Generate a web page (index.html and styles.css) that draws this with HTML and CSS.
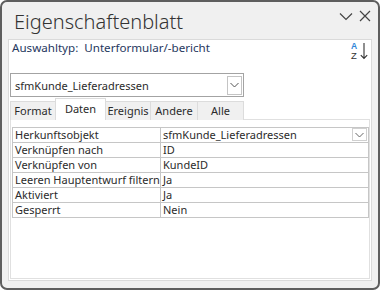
FILE: index.html
```html
<!DOCTYPE html>
<html>
<head>
<meta charset="utf-8" />
<title>Eigenschaftenblatt</title>
<link rel="stylesheet" href="styles.css">
</head>
<body>
<div class="window">
  <div class="titlebar">
    <h1 class="title">Eigenschaftenblatt</h1>
    <div class="title-btns">
      <svg class="tb-icon" width="14" height="10" viewBox="0 0 14 10"><polyline points="1,2.5 7,8.5 13,2.5" fill="none" stroke="#444" stroke-width="1.2"/></svg>
      <svg class="tb-icon" width="12" height="12" viewBox="0 0 12 12"><path d="M1 1L11 11M11 1L1 11" fill="none" stroke="#444" stroke-width="1.2"/></svg>
    </div>
  </div>

  <div class="panel">
    <div class="selrow">
      <span class="seltype">Auswahltyp:&nbsp;&nbsp;Unterformular/-bericht</span>
      <div class="sort-icon">
        <div class="sort-letters">
          <span class="sort-a">A</span>
          <span class="sort-z">Z</span>
        </div>
        <svg width="8" height="18" viewBox="0 0 8 18"><path d="M4 1V16.5M0.8 13.2L4 16.5L7.2 13.2" fill="none" stroke="#333" stroke-width="1.1"/></svg>
      </div>
    </div>

    <div class="combo">
      <span class="combo-text">sfmKunde_Lieferadressen</span>
      <span class="combo-btn">
        <svg width="9" height="6" viewBox="0 0 9 6"><polyline points="0.5,1 4.5,5 8.5,1" fill="none" stroke="#555" stroke-width="1"/></svg>
      </span>
    </div>

    <div class="tabs">
      <div class="tab tab-format">Format</div>
      <div class="tab tab-daten active">Daten</div>
      <div class="tab tab-ereignis">Ereignis</div>
      <div class="tab tab-andere">Andere</div>
      <div class="tab tab-alle">Alle</div>
    </div>

    <div class="pane">
      <table class="props">
        <tr><td class="lbl">Herkunftsobjekt</td><td class="val val-combo">sfmKunde_Lieferadressen<span class="cell-btn"><svg width="9" height="6" viewBox="0 0 9 6"><polyline points="0.5,1 4.5,5 8.5,1" fill="none" stroke="#666" stroke-width="1"/></svg></span></td></tr>
        <tr><td class="lbl">Verknüpfen nach</td><td class="val">ID</td></tr>
        <tr><td class="lbl">Verknüpfen von</td><td class="val">KundeID</td></tr>
        <tr><td class="lbl">Leeren Hauptentwurf filtern</td><td class="val">Ja</td></tr>
        <tr><td class="lbl">Aktiviert</td><td class="val">Ja</td></tr>
        <tr><td class="lbl">Gesperrt</td><td class="val">Nein</td></tr>
      </table>
    </div>
  </div>
</div>
</body>
</html>
```

FILE: styles.css
```css
body {
  margin: 0;
  background: #fff;
  font-family: 'Noto Sans', 'Segoe UI', sans-serif;
  color: #2b2b2b;
}

.window {
  width: 380px;
  height: 290px;
  box-sizing: border-box;
  border: 2px solid #5e5e5e;
  border-radius: 7px;
  background: #f0f0f0;
  overflow: hidden;
}

.titlebar {
  height: 37px;
  display: flex;
  justify-content: space-between;
  align-items: flex-start;
}

.title {
  margin: 0;
  padding: 6px 0 0 12px;
  font-size: 20px;
  line-height: 28px;
  font-weight: 300;
  color: #333;
}

.title-btns {
  display: flex;
  align-items: center;
  gap: 6px;
  padding: 8px 7px 0 0;
}

.panel {
  margin: 0 6px;
  height: 242px;
  box-sizing: border-box;
  border: 1px solid #dadada;
  background: #fff;
}

.selrow {
  height: 33px;
  display: flex;
  justify-content: space-between;
  align-items: flex-start;
  padding: 0 3px;
}

.seltype {
  font-size: 11.6px;
  line-height: 15px;
  color: #26385e;
}

.sort-icon {
  display: flex;
  align-items: flex-start;
  gap: 1px;
  margin-top: 2px;
}

.sort-letters {
  display: flex;
  flex-direction: column;
  width: 10px;
  text-align: center;
  font-family: 'Liberation Sans', sans-serif;
}

.sort-a {
  font-size: 8.5px;
  line-height: 9px;
  font-weight: bold;
  color: #2f86d8;
}

.sort-z {
  font-size: 9.5px;
  line-height: 10px;
  color: #333;
}

.combo {
  margin-left: 1px;
  width: 234px;
  height: 24px;
  box-sizing: border-box;
  border: 1px solid #a3a3a3;
  display: flex;
  align-items: center;
  justify-content: space-between;
  padding: 0 1px 0 4px;
}

.combo-text {
  font-size: 11px;
}

.combo-btn {
  width: 15px;
  height: 19px;
  box-sizing: border-box;
  border: 1px solid #c4c4c4;
  display: flex;
  align-items: center;
  justify-content: center;
}

.tabs {
  display: flex;
  align-items: flex-end;
  height: 22px;
  margin: 1px 0 -1px 1px;
  position: relative;
}

.tab {
  height: 19px;
  box-sizing: border-box;
  border: 1px solid #dcdcdc;
  border-bottom: none;
  background: #f0f0f0;
  font-size: 11px;
  line-height: 18px;
  text-align: center;
}

.tab + .tab {
  margin-left: -1px;
}

.tab.active {
  height: 22px;
  background: #fff;
  line-height: 20px;
}

.tab-format { width: 46px; }
.tab-daten { width: 51px; }
.tab-ereignis { width: 46px; }
.tab-andere { width: 48px; }
.tab-alle { width: 47px; }

.pane {
  margin-left: 1px;
  width: 360px;
  height: 160px;
  box-sizing: border-box;
  border: 1px solid #e0e0e0;
  padding: 7px 0 0 1px;
}

.props {
  border-collapse: collapse;
  table-layout: fixed;
  width: 357px;
  font-size: 11px;
}

.props td {
  border: 1px solid #c6c6c6;
  height: 14px;
  padding: 0 0 0 2px;
  line-height: 14px;
  white-space: nowrap;
  overflow: hidden;
}

.lbl {
  width: 145px;
}

.val-combo {
  position: relative;
}

.cell-btn {
  position: absolute;
  right: 1px;
  top: 0;
  width: 15px;
  height: 13px;
  box-sizing: border-box;
  border: 1px solid #d0d0d0;
  background: #fff;
  display: flex;
  align-items: center;
  justify-content: center;
}
```
